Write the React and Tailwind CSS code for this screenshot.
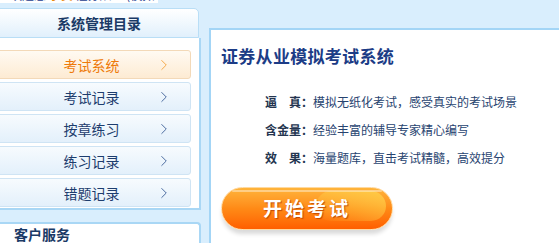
import { ChevronRight } from "lucide-react";

const menu = [
  { label: "考试系统", active: true },
  { label: "考试记录" },
  { label: "按章练习" },
  { label: "练习记录" },
  { label: "错题记录" },
];

const features = [
  { label: "逼　真：", text: "模拟无纸化考试，感受真实的考试场景" },
  { label: "含金量：", text: "经验丰富的辅导专家精心编写" },
  { label: "效　果：", text: "海量题库，直击考试精髓，高效提分" },
];

function MenuItem({ label, active }) {
  return (
    <div
      className={`-ml-px h-[29px] w-[192px] rounded-r-[3px] border flex items-center ${
        active
          ? "border-[#f3d9b8] bg-gradient-to-b from-[#fffaf2] to-[#fdebd3] text-[#ee7a0a]"
          : "border-[#cfe4f4] bg-gradient-to-b from-[#f7fbfe] to-[#e3f0fb] text-[#1d3d6e]"
      }`}
    >
      <span className="flex-1 pl-[28px] text-center text-[14px] leading-none">{label}</span>
      <ChevronRight
        className={`mr-[17px] ${active ? "text-[#f39a2a]" : "text-[#2a4f8c]"}`}
        size={18}
        strokeWidth={1.1}
      />
    </div>
  );
}

export default function App() {
  return (
    <div className="w-[559px] h-[243px] overflow-hidden bg-[#d9eefd] flex font-['Noto_Sans_CJK_SC','Noto_Sans',sans-serif]">
      <div className="w-[201px] shrink-0 flex flex-col">
        <div className="h-[3px] shrink-0 w-[158px] bg-white overflow-hidden">
          <div className="-mt-[12px] pl-[10px] text-[12px] leading-[14px] text-[#1d3d8e] whitespace-nowrap">
            欢迎您 <span className="text-[#e8880a]">学员</span> 证券从业 (模拟考试)
          </div>
        </div>
        <div className="mt-[5px] -ml-px w-[200px] h-[31px] rounded-tr-[5px] border border-[#b9def6] bg-gradient-to-b from-white to-[#e1f0fc] flex items-center justify-center text-[14px] font-bold text-[#1b3a66]">
          系统管理目录
        </div>
        <div className="h-[175px] bg-white border-r-2 border-b-2 border-[#a9d7f5] pt-[12px] flex flex-col gap-[3px]">
          {menu.map((m) => (
            <MenuItem key={m.label} {...m} />
          ))}
        </div>
        <div className="mt-[12px] flex-1 bg-white border-t-2 border-r-2 border-[#a9d7f5] rounded-tr-[4px] pl-[14px] pt-[1px] text-[14px] font-bold text-[#1b3a66] leading-[18px]">
          客户服务
        </div>
      </div>

      <div className="ml-[8px] mt-[28px] flex-1 bg-white border-l-2 border-t-2 border-[#a3d5f6] pl-[10px] pt-[14px]">
        <h1 className="text-[17px] leading-[24px] font-bold text-[#1c3c86] tracking-[0.3px]">
          证券从业模拟考试系统
        </h1>
        <div className="mt-[20px] ml-[44px] flex flex-col">
          {features.map((f) => (
            <div key={f.label} className="h-[28px] flex items-center text-[12px]">
              <span className="w-[48px] font-bold text-[#243550]">{f.label}</span>
              <span className="text-[#27436f]">{f.text}</span>
            </div>
          ))}
        </div>
        <div className="mt-[15px] w-[172px]">
          <button className="relative w-[172px] h-[43px] rounded-full border border-[#ffd9a0] bg-gradient-to-b from-[#ffb43a] via-[#ff8a16] to-[#ff5e00] shadow-[0_5px_4px_-1px_rgba(0,0,0,0.15)] overflow-hidden flex items-center justify-center">
            <span className="absolute right-[6px] top-[3px] w-[70px] h-[30px] rounded-full bg-gradient-to-bl from-[#ffd24a] to-transparent opacity-80" />
            <span className="absolute left-[10px] right-[10px] top-[2px] h-[2px] rounded-full bg-white/40" />
            <span className="relative text-[19px] font-bold text-white tracking-[3px] [text-shadow:1px_1px_1px_rgba(180,60,0,0.8)]">
              开始考试
            </span>
          </button>
        </div>
      </div>
    </div>
  );
}
